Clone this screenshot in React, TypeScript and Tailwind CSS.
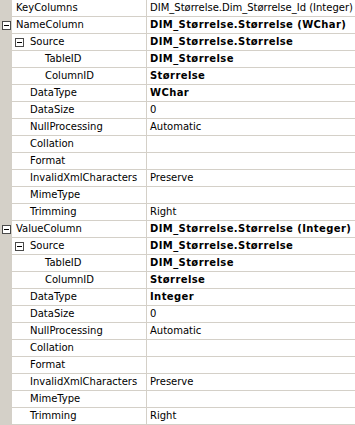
type Row = {
  name: string;
  value?: string;
  level: 0 | 1 | 2;
  bold?: boolean;
  box?: boolean;
};

const columnRows = (title: string, type: string): Row[] => [
  { name: title, value: `DIM_Størrelse.Størrelse (${type})`, level: 0, bold: true, box: true },
  { name: 'Source', value: 'DIM_Størrelse.Størrelse', level: 1, bold: true, box: true },
  { name: 'TableID', value: 'DIM_Størrelse', level: 2, bold: true },
  { name: 'ColumnID', value: 'Størrelse', level: 2, bold: true },
  { name: 'DataType', value: type, level: 1, bold: true },
  { name: 'DataSize', value: '0', level: 1 },
  { name: 'NullProcessing', value: 'Automatic', level: 1 },
  { name: 'Collation', level: 1 },
  { name: 'Format', level: 1 },
  { name: 'InvalidXmlCharacters', value: 'Preserve', level: 1 },
  { name: 'MimeType', level: 1 },
  { name: 'Trimming', value: 'Right', level: 1 },
];

const rows: Row[] = [
  { name: 'KeyColumns', value: 'DIM_Størrelse.Dim_Størrelse_Id (Integer)', level: 0 },
  ...columnRows('NameColumn', 'WChar'),
  ...columnRows('ValueColumn', 'Integer'),
];

const MinusBox = () => (
  <span className="flex h-[9px] w-[9px] items-center justify-center border border-[#4a4a4a] bg-white">
    <span className="h-px w-[5px] bg-black" />
  </span>
);

const PropRow = ({ row }: { row: Row }) => (
  <div className="flex h-[17px]">
    <div className="flex w-[12px] shrink-0 items-center bg-[#d4d0c8] pb-px pl-[2px]">
      {row.level === 0 && row.box && <MinusBox />}
    </div>
    <div className="flex w-[135px] shrink-0 items-center border-r border-b border-[#d4d0c8] bg-white">
      {row.level === 0 && <span className="pl-[4px]">{row.name}</span>}
      {row.level === 1 && (
        <>
          <span className="w-[18px] shrink-0 pl-[3px]">{row.box && <MinusBox />}</span>
          <span>{row.name}</span>
        </>
      )}
      {row.level === 2 && <span className="pl-[33px]">{row.name}</span>}
    </div>
    <div className="flex min-w-0 flex-1 items-center border-b border-[#d4d0c8] bg-white pl-[3px]">
      <span className={row.bold ? 'font-bold tracking-[0.4px] whitespace-nowrap' : 'whitespace-nowrap'}>
        {row.value}
      </span>
    </div>
  </div>
);

export default function App() {
  return (
    <div className="w-[355px] overflow-hidden bg-white font-['DejaVu_Sans',sans-serif] text-[10px] leading-none text-black">
      {rows.map((r, i) => (
        <PropRow key={i} row={r} />
      ))}
    </div>
  );
}
